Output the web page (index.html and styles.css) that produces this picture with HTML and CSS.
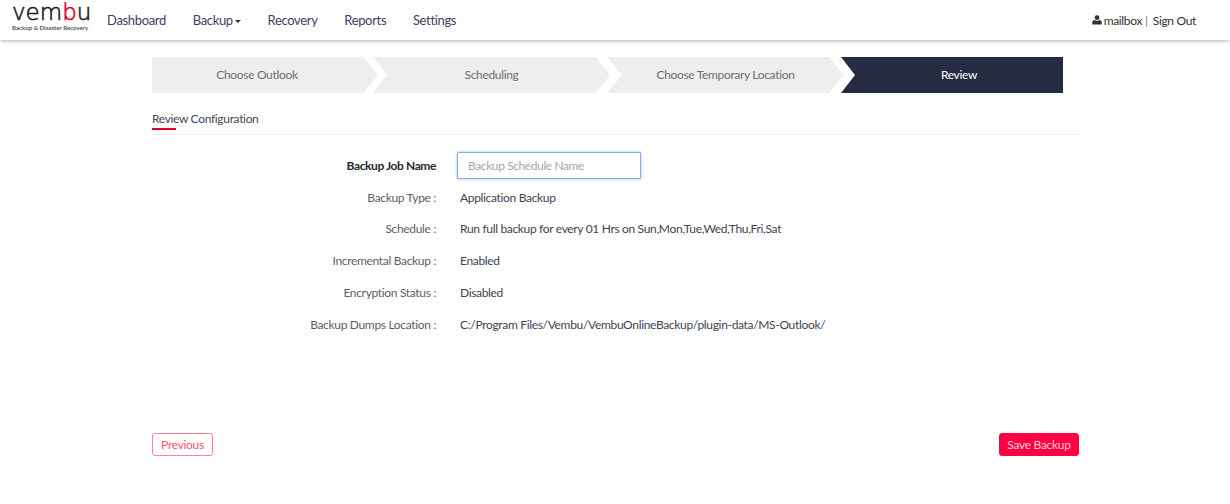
FILE: index.html
```html
<!DOCTYPE html>
<html lang="en">
<head>
<meta charset="utf-8">
<title>Review</title>
<link rel="stylesheet" href="styles.css">
</head>
<body>
<header class="topbar">
  <div class="logo">
    <div class="logo-word">vem<span class="logo-b">b</span>u</div>
    <div class="logo-tag">Backup &amp; Disaster Recovery</div>
  </div>
  <nav class="nav">
    <a class="nav-link">Dashboard</a>
    <a class="nav-link">Backup<i class="caret"></i></a>
    <a class="nav-link">Recovery</a>
    <a class="nav-link">Reports</a>
    <a class="nav-link">Settings</a>
  </nav>
  <div class="user">
    <svg class="user-icon" viewBox="0 0 10 10"><circle cx="5" cy="2.7" r="2.4"/><path d="M0.3 9.6V7.4C0.3 6 1.4 5.2 2.6 5.1C3.3 5.7 4.1 6 5 6C5.9 6 6.7 5.7 7.4 5.1C8.6 5.2 9.7 6 9.7 7.4V9.6Z"/></svg>
    <span>mailbox</span><span class="sep">|</span><span>Sign Out</span>
  </div>
</header>
<main class="page">
  <ol class="steps">
    <li class="step step-first">Choose Outlook</li>
    <li class="step step-second">Scheduling</li>
    <li class="step step-third">Choose Temporary Location</li>
    <li class="step step-last">Review</li>
  </ol>
  <div class="tabs"><span class="tab">Review Configuration</span></div>
  <div class="form">
    <div class="row row-input">
      <label class="key key-strong">Backup Job Name</label>
      <input class="field" type="text" placeholder="Backup Schedule Name">
    </div>
    <div class="row row-type"><span class="key">Backup Type :</span><span class="val">Application Backup</span></div>
    <div class="row"><span class="key">Schedule :</span><span class="val">Run full backup for every 01 Hrs on Sun,Mon,Tue,Wed,Thu,Fri,Sat</span></div>
    <div class="row"><span class="key">Incremental Backup :</span><span class="val">Enabled</span></div>
    <div class="row"><span class="key">Encryption Status :</span><span class="val">Disabled</span></div>
    <div class="row"><span class="key">Backup Dumps Location :</span><span class="val">C:/Program Files/Vembu/VembuOnlineBackup/plugin-data/MS-Outlook/</span></div>
  </div>
  <div class="actions">
    <button class="btn btn-outline">Previous</button>
    <button class="btn btn-solid">Save Backup</button>
  </div>
</main>
</body>
</html>
```
FILE: styles.css
```css
* { box-sizing: border-box; }
html, body { margin: 0; padding: 0; }
body {
  width: 1230px;
  height: 504px;
  overflow: hidden;
  background: #fff;
  font-family: Lato, "Liberation Sans", sans-serif;
  font-size: 12px;
  letter-spacing: -.33px;
  color: #3f4352;
}
.topbar {
  height: 40px;
  display: flex;
  align-items: center;
  padding: 0 34px 0 12px;
  background: #fff;
  box-shadow: 0 1px 4px rgba(0,0,0,.3);
}
.logo { width: 95px; height: 40px; }
.logo-word {
  font-family: "DejaVu Sans", sans-serif;
  font-weight: 200;
  font-size: 23px;
  line-height: 24px;
  height: 24px;
  letter-spacing: 0;
  -webkit-text-stroke: .6px currentColor;
  color: #1c1c20;
}
.logo-b { color: #e4002b; }
.logo-tag {
  font-size: 6.1px;
  font-weight: 700;
  line-height: 7px;
  letter-spacing: 0;
  color: #555;
  white-space: nowrap;
}
.nav { display: flex; gap: 26.7px; }
.nav-link { font-size: 13px; color: #3d4160; }
.caret {
  display: inline-block;
  margin-left: 2px;
  vertical-align: 2px;
  border-top: 3px solid #333;
  border-left: 3px solid transparent;
  border-right: 3px solid transparent;
}
.user {
  margin-left: auto;
  display: flex;
  align-items: center;
  font-size: 12px;
  color: #333;
}
.user-icon { width: 10px; height: 10px; margin-right: 2px; fill: #333; }
.sep { margin: 0 5px 0 3px; color: #777; }
.page { width: 928px; margin: 17px 0 0 152px; }
.steps {
  list-style: none;
  margin: 0;
  padding: 0;
  display: flex;
  width: 911px;
  height: 36px;
}
.step {
  display: flex;
  align-items: center;
  justify-content: center;
  height: 36px;
  padding-bottom: 1px;
  background: #eeeeee;
  color: #6b6e76;
  font-size: 12px;
}
.step-first {
  width: 226px;
  padding-right: 16px;
  clip-path: polygon(0 0, 211px 0, 226px 50%, 211px 100%, 0 100%);
}
.step-second {
  width: 237px;
  margin-left: -5px;
  padding-left: 14px;
  padding-right: 14px;
  clip-path: polygon(0 0, 223px 0, 237px 50%, 223px 100%, 0 100%, 14px 50%);
}
.step-third {
  width: 236px;
  margin-left: -3px;
  padding-left: 15px;
  padding-right: 14px;
  clip-path: polygon(0 0, 222px 0, 236px 50%, 222px 100%, 0 100%, 15px 50%);
}
.step-last {
  width: 222px;
  margin-left: -2px;
  padding-left: 14px;
  background: #252b40;
  color: #fff;
  clip-path: polygon(0 0, 100% 0, 100% 100%, 0 100%, 14px 50%);
}
.tabs {
  height: 25px;
  margin-top: 17px;
  border-bottom: 1px solid #f0f0f0;
}
.tab {
  display: block;
  width: max-content;
  position: relative;
  line-height: 18px;
  color: #444857;
}
.tab::after {
  content: "";
  position: absolute;
  left: 0;
  top: 18px;
  width: 24px;
  height: 2px;
  background: #e4002b;
}
.form { margin-top: 17px; }
.row {
  display: flex;
  align-items: center;
  height: 32px;
}
.row-input { height: 27px; }
.row-type { margin-top: 3px; height: 30px; }
.key {
  width: 284px;
  text-align: right;
  color: #5c5f68;
}
.key-strong { color: #26282f; font-weight: 700; letter-spacing: -.4px; }
.val { margin-left: 24px; color: #3f4352; }
.field {
  width: 184px;
  height: 27px;
  margin-left: 21px;
  padding: 0 10px;
  border: 1px solid #8aabec;
  border-radius: 1px;
  box-shadow: 0 0 3px rgba(90,140,230,.6);
  outline: none;
  font: inherit;
  letter-spacing: -.4px;
}
.field::placeholder { color: #a5a7ad; opacity: 1; }
.actions {
  display: flex;
  justify-content: space-between;
  width: 927px;
  margin-top: 93px;
}
.btn {
  height: 23px;
  padding: 0;
  border-radius: 3px;
  font: inherit;
  letter-spacing: -.3px;
}
.btn-outline {
  width: 61px;
  background: #fff;
  border: 1px solid #ff7f98;
  color: #ff4f78;
}
.btn-solid {
  width: 80px;
  background: #ff0043;
  border: 1px solid #ff0043;
  color: #ffd3dd;
}
```
